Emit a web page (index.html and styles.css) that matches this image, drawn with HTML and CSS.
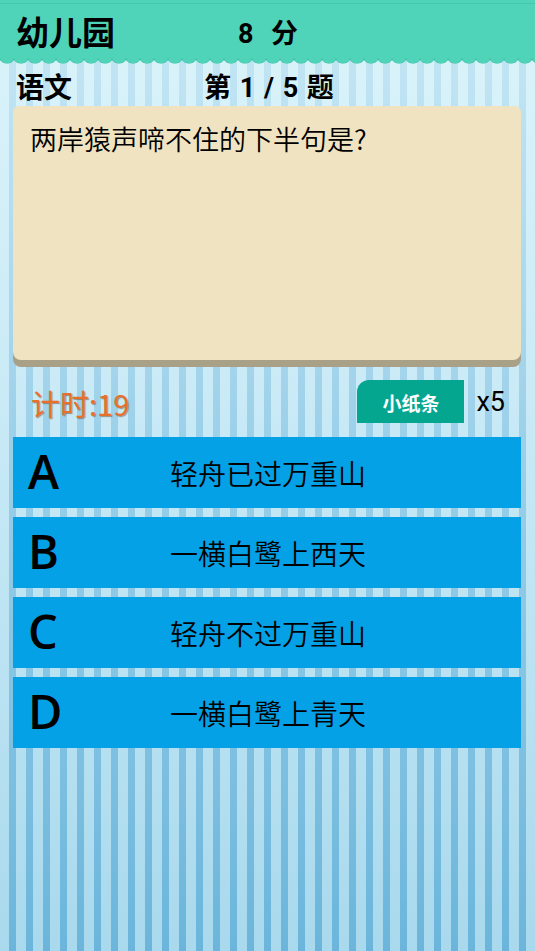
FILE: index.html
```html
<!DOCTYPE html>
<html lang="zh">
<head>
<meta charset="utf-8">
<title>幼儿园</title>
<link rel="stylesheet" href="styles.css">
</head>
<body>
<div class="page">
  <header class="topbar">
    <div class="level">幼儿园</div>
    <div class="score">8&nbsp;&nbsp;分</div>
  </header>
  <div class="wave"></div>
  <div class="subbar">
    <div class="subject">语文</div>
    <div class="progress">第 1 / 5 题</div>
  </div>
  <div class="card">
    <div class="question">两岸猿声啼不住的下半句是?</div>
  </div>
  <div class="tools">
    <div class="timer">计时:19</div>
    <div class="hint">
      <div class="hint-btn">小纸条</div>
      <div class="hint-count">x5</div>
    </div>
  </div>
  <div class="options">
    <div class="option"><span class="letter">A</span><span class="answer">轻舟已过万重山</span></div>
    <div class="option"><span class="letter">B</span><span class="answer">一横白鹭上西天</span></div>
    <div class="option"><span class="letter">C</span><span class="answer">轻舟不过万重山</span></div>
    <div class="option"><span class="letter">D</span><span class="answer">一横白鹭上青天</span></div>
  </div>
</div>
</body>
</html>
```
FILE: styles.css
```css
html, body {
  margin: 0;
  padding: 0;
}
body {
  width: 535px;
  height: 951px;
  overflow: hidden;
  font-family: Roboto, "Noto Sans CJK SC", sans-serif;
  color: #000;
  background:
    linear-gradient(to bottom, rgba(232, 249, 253, 0.7) 0, rgba(232, 249, 253, 0.35) 450px, rgba(232, 249, 253, 0) 951px),
    repeating-linear-gradient(90deg, rgba(0, 0, 0, 0) 0 9px, rgba(0, 120, 190, 0.37) 9px 16px, rgba(0, 0, 0, 0) 16px 17px),
    linear-gradient(to bottom, #bee6f5 0, #a9d9ed 951px);
}
.page {
  display: flex;
  flex-direction: column;
  height: 951px;
}
.topbar {
  height: 58px;
  background: #4fd4b9;
  box-shadow: inset 0 3px 0 #4fd4b9, inset 0 4px 0 #46c8ac;
  display: flex;
  align-items: center;
  padding: 4px 0 0 16px;
  box-sizing: border-box;
}
.level {
  font-size: 33px;
  font-weight: 700;
  font-family: "Noto Sans CJK SC", sans-serif;
  width: 222px;
  line-height: 40px;
}
.score {
  font-size: 27px;
  font-weight: 700;
  line-height: 40px;
  margin-top: 6px;
  word-spacing: 2px;
}
.wave {
  height: 8px;
  background:
    radial-gradient(ellipse 8px 6px at 7px 0, #4fd4b9 0 80%, #3fc2a6 85%, rgba(63, 194, 166, 0) 100%) 0 0 / 14px 8px repeat-x;
  margin-bottom: -1px;
}
.subbar {
  height: 41px;
  display: flex;
  align-items: center;
  padding-left: 16px;
  font-size: 27px;
  font-weight: 700;
}
.subject {
  width: 188px;
  font-size: 28px;
  font-family: "Noto Sans CJK SC", sans-serif;
}
.progress {
  word-spacing: 2px;
}
.card {
  margin: 0 14px 0 13px;
  height: 254px;
  background: #efe3c1;
  border-radius: 6px 6px 8px 8px;
  box-shadow: 0 7px 0 #a9a088;
  padding: 15px 17px;
  box-sizing: border-box;
}
.question {
  font-family: "Noto Sans CJK SC", sans-serif;
  font-size: 27px;
  font-weight: 350;
  line-height: 36px;
}
.tools {
  height: 70px;
  margin-top: 7px;
  display: flex;
  align-items: center;
  justify-content: space-between;
  padding: 0 30px 0 31px;
  box-sizing: border-box;
}
.timer {
  font-family: "Noto Sans CJK SC", sans-serif;
  font-size: 29px;
  font-weight: 400;
  color: #e8702a;
  text-shadow: 1px 1px 1px rgba(90, 40, 0, 0.45);
  margin-top: 2px;
}
.hint {
  display: flex;
  align-items: center;
  gap: 12px;
  margin-top: -1px;
}
.hint-btn {
  width: 107px;
  height: 43px;
  background: #05a690;
  border-radius: 12px 0 0 0;
  color: #fff;
  font-family: "Noto Sans CJK SC", sans-serif;
  font-weight: 700;
  font-size: 19px;
  display: flex;
  align-items: center;
  justify-content: center;
  padding-top: 2px;
  box-sizing: border-box;
}
.hint-count {
  font-size: 27px;
  font-family: Roboto, sans-serif;
}
.options {
  display: flex;
  flex-direction: column;
  gap: 9px;
  margin: 0 14px 0 13px;
}
.option {
  height: 71px;
  background: #04a1e6;
  display: flex;
  align-items: center;
}
.letter {
  font-family: "Open Sans", sans-serif;
  font-weight: 600;
  font-size: 47px;
  width: 157px;
  padding-left: 15px;
  box-sizing: border-box;
  line-height: 1;
  margin-top: -2px;
}
.answer {
  font-family: "Noto Sans CJK SC", sans-serif;
  font-size: 28px;
  font-weight: 350;
  line-height: 1;
}
```
